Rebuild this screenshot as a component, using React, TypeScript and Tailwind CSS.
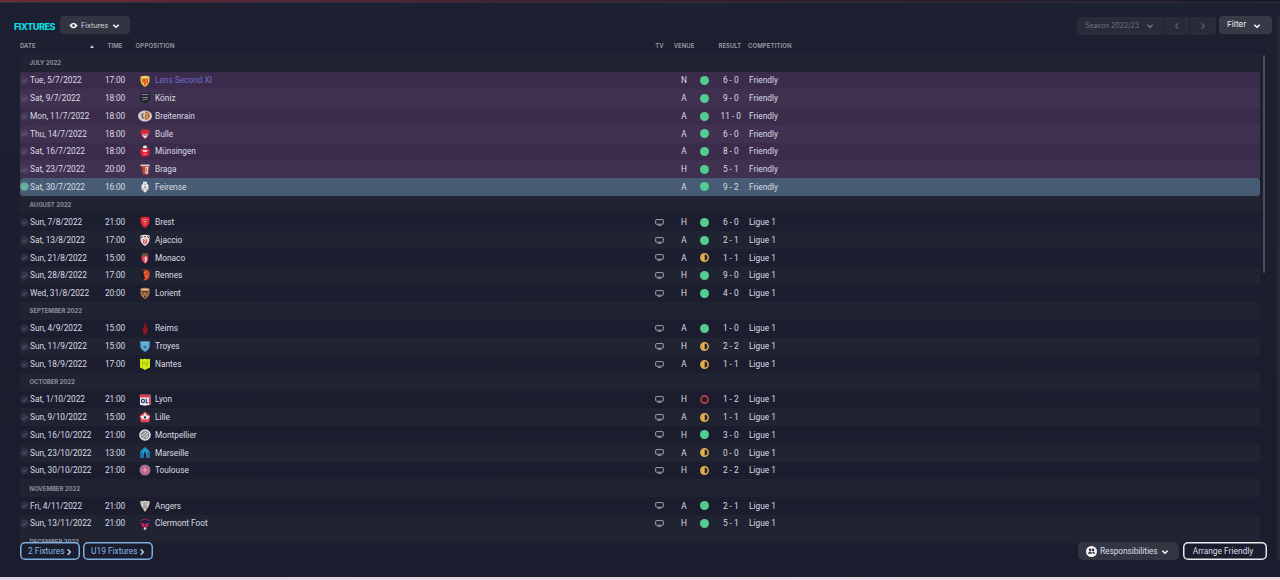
import type { ReactNode } from "react";
import clsx from "clsx";

type Result = "win" | "draw" | "loss";

type Fixture = {
  date: string;
  time: string;
  team: string;
  venue: string;
  result: Result;
  score: string;
};

type Month = {
  name: string;
  competition: string;
  fixtures: Fixture[];
};

const f = (
  date: string,
  time: string,
  team: string,
  venue: string,
  score: string,
  result: Result = "win",
): Fixture => ({ date, time, team, venue, score, result });

const months: Month[] = [
  {
    name: "JULY 2022",
    competition: "Friendly",
    fixtures: [
      f("Tue, 5/7/2022", "17:00", "Lens Second XI", "N", "6 - 0"),
      f("Sat, 9/7/2022", "18:00", "Köniz", "A", "9 - 0"),
      f("Mon, 11/7/2022", "18:00", "Breitenrain", "A", "11 - 0"),
      f("Thu, 14/7/2022", "18:00", "Bulle", "A", "6 - 0"),
      f("Sat, 16/7/2022", "18:00", "Münsingen", "A", "8 - 0"),
      f("Sat, 23/7/2022", "20:00", "Braga", "H", "5 - 1"),
      f("Sat, 30/7/2022", "16:00", "Feirense", "A", "9 - 2"),
    ],
  },
  {
    name: "AUGUST 2022",
    competition: "Ligue 1",
    fixtures: [
      f("Sun, 7/8/2022", "21:00", "Brest", "H", "6 - 0"),
      f("Sat, 13/8/2022", "17:00", "Ajaccio", "A", "2 - 1"),
      f("Sun, 21/8/2022", "15:00", "Monaco", "A", "1 - 1", "draw"),
      f("Sun, 28/8/2022", "17:00", "Rennes", "H", "9 - 0"),
      f("Wed, 31/8/2022", "20:00", "Lorient", "H", "4 - 0"),
    ],
  },
  {
    name: "SEPTEMBER 2022",
    competition: "Ligue 1",
    fixtures: [
      f("Sun, 4/9/2022", "15:00", "Reims", "A", "1 - 0"),
      f("Sun, 11/9/2022", "15:00", "Troyes", "H", "2 - 2", "draw"),
      f("Sun, 18/9/2022", "17:00", "Nantes", "A", "1 - 1", "draw"),
    ],
  },
  {
    name: "OCTOBER 2022",
    competition: "Ligue 1",
    fixtures: [
      f("Sat, 1/10/2022", "21:00", "Lyon", "H", "1 - 2", "loss"),
      f("Sun, 9/10/2022", "15:00", "Lille", "A", "1 - 1", "draw"),
      f("Sun, 16/10/2022", "21:00", "Montpellier", "H", "3 - 0"),
      f("Sun, 23/10/2022", "13:00", "Marseille", "A", "0 - 0", "draw"),
      f("Sun, 30/10/2022", "21:00", "Toulouse", "H", "2 - 2", "draw"),
    ],
  },
  {
    name: "NOVEMBER 2022",
    competition: "Ligue 1",
    fixtures: [
      f("Fri, 4/11/2022", "21:00", "Angers", "A", "2 - 1"),
      f("Sun, 13/11/2022", "21:00", "Clermont Foot", "H", "5 - 1"),
    ],
  },
  { name: "DECEMBER 2022", competition: "Ligue 1", fixtures: [] },
];

const shield = "M2.500 1.500Q7 .2 11.500 1.500V6Q11 9.500 7 12Q3 9.500 2.500 6Z";

// Club crests, all drawn on a 14x12 canvas
const crests: Record<string, ReactNode> = {
  "Lens Second XI": (
    <>
      <path d={shield} fill="#edc63a" />
      <path d="M5 3.500v4M7 3.500v7M9.200 3.500v5" stroke="#d3262d" strokeWidth="1.200" />
      <path d="M3.500 1.800h7v1.200h-7z" fill="#f0df8b" />
    </>
  ),
  Köniz: (
    <>
      <path d="M2 .8h10v7Q11 10.200 7 11.700Q3 10.200 2 7.800Z" fill="#22252b" />
      <path d="M3.500 2.500h7M4 5.500h6M4.500 8l5-1" stroke="#8b9297" strokeWidth=".9" />
    </>
  ),
  Breitenrain: (
    <>
      <ellipse cx="7" cy="6" rx="7" ry="5.600" fill="#d5cccb" />
      <path d="M7 1.500q5 0 5 4.500q-1 4-5 4z" fill="#b57233" />
      <path d="M3 4l3-1-1 3 2 2-3 1z" fill="#7b7580" />
      <path d="M9 3v2M8 7.500l2-1" stroke="#eadfcb" strokeWidth=".8" fill="none" />
    </>
  ),
  Bulle: (
    <>
      <path d="M2.500 3l2-1.500h5L12 3l-1.500 5L7 11 3.500 8z" fill="#d22b3c" />
      <path d="M4.200 5.500l1.500 1 1.300-1 1.300 1 1.500-1-.8 3L7 10.500 5 8.500z" fill="#f0e6ea" />
      <path d="M5.500 7h3" stroke="#5a2233" strokeWidth=".9" />
    </>
  ),
  Münsingen: (
    <>
      <path d="M2.500 3.500h9v5L10 11.500H4L2.500 8.500z" fill="#e01f35" />
      <path d="M5.500 1h3v2h-3zM4.500 5l1 1.500h3l1-1.500M5.500 9h3" fill="#f4dfe1" stroke="#f4dfe1" strokeWidth=".7" />
    </>
  ),
  Braga: (
    <>
      <path d="M3 2h8.500v2L10.500 11.500H5L4 4z" fill="#c04834" />
      <path d="M2.500 1.500h9v1.700h-9z" fill="#d3cccb" />
      <path d="M7.500 4h2.800L9.500 11h-2z" fill="#e6dddb" />
      <path d="M8.500 5v4" stroke="#786c7d" strokeWidth=".7" />
    </>
  ),
  Feirense: (
    <>
      <path d="M5 .8h4v2l1.500 1.200v4L7 11.800 3.500 8V4L5 2.800z" fill="#e6e7ea" />
      <path d="M5.500 3.200h3M5 7.500l1 1.500M9 7.500L8 9" stroke="#bf8a5c" strokeWidth=".8" />
      <path d="M6.200 5.300h1.600v2H6.200z" fill="#8592b0" />
    </>
  ),
  Brest: (
    <>
      <path d={shield} fill="#e02536" />
      <path d="M4.300 4q2.700-1.200 5.400 0M7 5v4M5.500 5.500h3" stroke="#f59aa0" strokeWidth=".8" fill="none" />
    </>
  ),
  Ajaccio: (
    <>
      <path d={shield} fill="#e7e1e2" />
      <path d="M5 5l.8 4.500M7 5.500v5M9 5l-.8 4.500" stroke="#d9434b" strokeWidth="1" />
      <path d="M3.200 4l1.500-2M9.300 2l1.500 2M6 2.800h2" stroke="#34313b" strokeWidth=".9" fill="none" />
    </>
  ),
  Monaco: (
    <>
      <path d="M3.700 3.500h6.600V8L7 11.900 3.700 8z" fill="#e9384f" />
      <path d="M6.800 4.500h2v5l-2 1.500z" fill="#f3cdd2" />
      <path d="M3.700 3l1-1.800h4.600L10.300 3v1.200H3.700z" fill="#6e5340" />
    </>
  ),
  Rennes: (
    <>
      <path d="M4 .8Q9-.3 11 2Q12.500 5 11 9Q8.500 12.200 5 11.200Q8 7 3 5Z" fill="#d94a26" />
      <path d="M2.500 2.500Q5 .5 7 2L5.500 5l1.500 4-1.500 2Q2.500 7 2.500 2.500z" fill="#221b20" />
      <path d="M5.500 3.200h2M8 6.500v2" stroke="#e8c9b9" strokeWidth=".9" />
    </>
  ),
  Lorient: (
    <>
      <path d={shield} fill="#bf7d48" />
      <path d="M3.500 2.600h7" stroke="#e0cbae" strokeWidth="1.200" />
      <path d="M3.500 4.200h7v1.300h-7zM4 6.500h2v1H4zM8 6.500h2v1H8zM6 8.500h2v2H6z" fill="#39323a" />
    </>
  ),
  Reims: (
    <path d="M6 .3h2.300L8.200 3.500l1.500 2-.2 3-1.200 1 .5 2.300H5.200L5.700 9.500 4.500 8.500 4.800 5.500 6.200 3.800z" fill="#8e1420" />
  ),
  Troyes: (
    <>
      <path d="M2.200 1.200h9.600V6Q11.500 9.800 7 11.900Q2.500 9.800 2.200 6Z" fill="#4d9fd3" />
      <path d="M3.500 2.900h7M4.700 5h4.600v2.500L7 9.500 4.700 7.500z" stroke="#b4d6e8" strokeWidth=".7" fill="#2c72a6" />
    </>
  ),
  Nantes: (
    <>
      <path d="M2 .8q2.500.8 5 0 2.500.8 5 0V9.500q-2 .5-5 2.500Q4 10 2 9.500z" fill="#d2ea14" />
      <path d="M4.500 8.500v-5L6.500 6V4M7.500 8l2-4.500V8" stroke="#8fab1b" strokeWidth=".6" fill="none" />
    </>
  ),
  Lyon: (
    <>
      <path d="M2 .8h10.500v10L7 11.700 2 10.700z" fill="#ebe7ea" />
      <path d="M1.500 .8H12.500v2.700H1.500z" fill="#dc3c44" />
      <path d="M11 4h1.500v6.500l-1.500.3z" fill="#dc3c44" />
      <circle cx="5" cy="7" r="1.600" fill="none" stroke="#244482" strokeWidth="1.200" />
      <path d="M8.300 4.700v4h2" stroke="#244482" strokeWidth="1.200" fill="none" />
    </>
  ),
  Lille: (
    <>
      <path d="M7 .5L12.500 5 11 11.300H3L1.500 5z" fill="#e5475a" />
      <path d="M7 1.500l1.500 3 3 .5L9.800 8.300H4.200L2.500 5l3-.5z" fill="#f7f0f3" />
      <path d="M6 5.200h1.800L8.300 7.500h-2.600z" fill="#263765" />
    </>
  ),
  Montpellier: (
    <>
      <circle cx="7" cy="6" r="5.800" fill="#dedee2" />
      <circle cx="7" cy="6" r="4.300" fill="#8a8d96" />
      <path d="M4 7l4-4M5 9l5-5M8 9l2-2" stroke="#f0eeec" strokeWidth=".9" />
    </>
  ),
  Marseille: (
    <path
      d="M3 11V5l2-2.500V8l2-7 2 7V2.500L11 5v6M5 11V8M9 11V8"
      stroke="#20a0d4"
      strokeWidth="1.300"
      fill="none"
    />
  ),
  Toulouse: (
    <>
      <circle cx="7" cy="6" r="5.500" fill="#98779a" />
      <circle cx="7" cy="6" r="3.600" fill="#cf6080" />
      <path d="M7 3.500v5M4.500 6h5" stroke="#e3b5c2" strokeWidth=".9" />
    </>
  ),
  Angers: (
    <>
      <path d="M2 1.500L7 .8l5 .7L10.800 6 7 12 3.200 6z" fill="#d6cfc7" />
      <path d="M6 4.500v4M8 4.500v4" stroke="#4b4643" strokeWidth=".7" />
      <path d="M4.500 3h5" stroke="#857b70" strokeWidth=".8" />
    </>
  ),
  "Clermont Foot": (
    <>
      <path d="M2 2.300q5-3 10 0L10.500 5h-7z" fill="#1b1e42" />
      <path d="M2 2.600q5-3 10 0" stroke="#b02a4c" strokeWidth=".9" fill="none" />
      <path d="M2.800 4.500L6 5.800h2l3.200-1.300L9.500 9l-2.500.5L4.500 9z" fill="#df1c5b" />
      <path d="M7 4.500v4" stroke="#262c60" strokeWidth="1.200" />
      <circle cx="7" cy="10.600" r="1.300" fill="#d2d0d6" />
    </>
  ),
};

function Chevron({ dir = "down", className }: { dir?: "down" | "left" | "right"; className?: string }) {
  const paths = {
    down: "M1.300 2.700L4 5.300L6.700 2.700",
    left: "M5.300 1.200L2.700 4L5.300 6.800",
    right: "M2.700 1.200L5.300 4L2.700 6.800",
  };
  return (
    <svg viewBox="0 0 8 8" className={clsx("size-2 shrink-0", className)} fill="none" stroke="currentColor" strokeWidth="1.500">
      <path d={paths[dir]} />
    </svg>
  );
}

function Tick({ active }: { active: boolean }) {
  return (
    <svg viewBox="0 0 10 10" className="size-[9px]" fill="none">
      <circle cx="5" cy="5" r="4.800" fill={active ? "#6fa399" : "#77788a"} fillOpacity={active ? 1 : 0.18} />
      <path
        d="M2.700 5.200l1.600 1.600 3.200-3.300"
        stroke={active ? "#3fe09d" : "#777889"}
        strokeOpacity={active ? 1 : 0.45}
        strokeWidth="1.200"
      />
    </svg>
  );
}

function ResultDot({ result }: { result: Result }) {
  return (
    <svg viewBox="0 0 9 9" className="size-[9px]">
      {result === "win" && <circle cx="4.500" cy="4.500" r="4.500" fill="#54cb90" />}
      {result === "draw" && (
        <>
          <circle cx="4.500" cy="4.500" r="3.700" fill="#272329" stroke="#e2b052" strokeWidth="1.500" />
          <path d="M4.700 1a3.500 3.500 0 0 0 0 7z" fill="#e2b052" />
        </>
      )}
      {result === "loss" && <circle cx="4.500" cy="4.500" r="3.600" fill="#301827" stroke="#b9454f" strokeWidth="1.600" />}
    </svg>
  );
}

function TvIcon() {
  return (
    <svg viewBox="0 0 9 7" className="h-[7px] w-[9px]" fill="none" stroke="#b0b1bb" strokeWidth=".9">
      <rect x=".7" y=".6" width="7.600" height="4.600" rx=".6" />
      <path d="M2.700 6.300h3.600" />
    </svg>
  );
}

const columns = "grid grid-cols-[10px_74px_22px_29px_494px_21px_28px_13px_38px_1fr] items-center";

function FixtureRow({ fixture, competition, shaded }: { fixture: Fixture; competition: string; shaded: boolean }) {
  const friendly = competition === "Friendly";
  const selected = fixture.team === "Feirense";

  return (
    <div
      className={clsx(
        columns,
        "h-[17.73px] shrink-0 whitespace-nowrap font-[Roboto,sans-serif] text-[8.3px] text-[#dadbe2]",
        selected && "rounded-[3px] bg-[#475c74]",
        !selected && friendly && (shaded ? "bg-[#403150]" : "bg-[#3b2c4b]"),
        !friendly && shaded && "bg-[#202332]",
      )}
    >
      <Tick active={selected} />
      <span className="tracking-[-0.03px]">{fixture.date}</span>
      <span className="text-center tracking-[-0.1px]">{fixture.time}</span>
      <svg viewBox="0 0 14 12" className="ml-[11.500px] h-3 w-3.5">
        {crests[fixture.team]}
      </svg>
      <span className={clsx(fixture.team === "Lens Second XI" && "text-[#746bd0]")}>{fixture.team}</span>
      <span className="flex justify-center">{!friendly && <TvIcon />}</span>
      <span className="text-center">{fixture.venue}</span>
      <span className="flex justify-center">
        <ResultDot result={fixture.result} />
      </span>
      <span className="pl-[1.500px] text-center">{fixture.score}</span>
      <span>{competition}</span>
    </div>
  );
}

function MonthRow({ name }: { name: string }) {
  return (
    <div className="flex h-[17.73px] shrink-0 items-center bg-[#202432] pt-px pl-[9.500px] text-[6px] font-bold tracking-[-0.05px] text-[#8b8d98]">
      {name}
    </div>
  );
}

function Header() {
  return (
    <div className="flex h-5 items-center pr-1 pl-3.5">
      <h1 className="mr-1 w-[42px] pt-0.5 text-[9px] font-extrabold tracking-[-0.4px] text-[#0cdce2]">FIXTURES</h1>
      <button className="flex h-[18px] w-[70px] items-center rounded-[4px] bg-[#323541] pt-px pl-[9px] text-[7.200px] text-[#d5d6dd]">
        <svg viewBox="0 0 9 7" className="mr-[3px] h-[7px] w-[9px]">
          <path d="M.3 3.500Q4.500-2 8.700 3.500Q4.500 9 .3 3.500z" fill="#f3f3f7" />
          <circle cx="4.500" cy="3.500" r="1.300" fill="#323541" />
        </svg>
        Fixtures
        <Chevron className="ml-1 text-white" />
      </button>
      <div className="mt-0.5 ml-auto flex h-[18px] divide-x divide-[#1e2130] overflow-hidden rounded-[4px] bg-[#282b39] text-[6.900px] text-[#70737f]">
        <button className="flex w-[87px] items-center pl-2">
          Season 2022/23
          <Chevron className="ml-[7px]" />
        </button>
        <button className="flex w-[26px] items-center justify-center">
          <Chevron dir="left" className="opacity-60" />
        </button>
        <button className="flex w-[26px] items-center justify-center">
          <Chevron dir="right" className="opacity-60" />
        </button>
      </div>
      <button className="ml-[3px] flex h-[18px] w-[53px] items-center rounded-[4px] bg-[#373a46] pb-px pl-[8px] text-[8.200px] text-[#eeeef2]">
        Filter
        <Chevron className="mt-0.5 ml-[7px] text-white" />
      </button>
    </div>
  );
}

function Footer() {
  const outline = "flex h-[18px] items-center rounded-[5px]";
  const blue = "pl-2 text-[#8ab9e7] shadow-[inset_0_0_0_1.5px_#7eaede]";

  return (
    <div className="flex h-[18px] items-center pr-[9px] pl-5 font-[Roboto,sans-serif] text-[8.400px]">
      <button className={clsx(outline, blue, "w-[60px]")}>
        2 Fixtures
        <Chevron dir="right" className="mt-px text-[#a9d1f5]" />
      </button>
      <button className={clsx(outline, blue, "ml-[3px] w-[70px]")}>
        U19 Fixtures
        <Chevron dir="right" className="mt-px text-[#a9d1f5]" />
      </button>
      <button className="ml-auto flex h-[18px] w-[101px] items-center rounded-[5px] bg-[#323542] pl-2 text-[#dddee4]">
        <svg viewBox="0 0 10 10" className="mr-[3px] size-[11px]">
          <circle cx="5" cy="5" r="5" fill="#f5f5f8" />
          <circle cx="3.700" cy="3.500" r="1.200" fill="#343643" />
          <circle cx="6.400" cy="3.500" r="1.200" fill="#343643" />
          <path d="M1.800 7q.3-2 2-2t1.700 2zM5.800 5.200q2-.5 2.500 1.800H6.200z" fill="#343643" />
        </svg>
        <span className="tracking-[-0.08px]">Responsibilities</span>
        <Chevron className="mt-px ml-1 text-white" />
      </button>
      <button
        className={clsx(outline, "ml-1 w-[84px] justify-center pr-1 text-[#dddee4] shadow-[inset_0_0_0_1.5px_#e8e9ee]")}
      >
        Arrange Friendly
      </button>
    </div>
  );
}

function App() {
  let row = 0;

  return (
    <div className="flex h-[580px] w-[1280px] flex-col overflow-hidden bg-linear-to-b from-[#1c2030] to-[#1b1c2d] font-[Inter,sans-serif] leading-none">
      <div className="h-[2px] shrink-0 bg-linear-to-r from-[#6e2a38] via-[#3b2030] to-[#1c1b2a]" />
      <div className="h-px shrink-0 bg-[#2c303e]" />
      <div className="flex min-h-0 flex-1">
        <div className="flex w-[1276px] flex-col pt-3">
          <Header />
          <div className={clsx(columns, "mt-1 ml-5 h-3.5 w-[1240px] shrink-0 text-[6px] font-semibold whitespace-nowrap text-[#9a9ca6]")}>
            <span className="col-span-2 flex items-center justify-between pr-[10px]">
              DATE
              <svg viewBox="0 0 4 3" className="h-[3px] w-1">
                <path d="M0 3L2 0L4 3z" fill="#c3c4cc" />
              </svg>
            </span>
            <span className="text-center">TIME</span>
            <span className="col-span-2 pl-[9.500px] tracking-[0.2px]">OPPOSITION</span>
            <span className="text-center">TV</span>
            <span className="text-center">VENUE</span>
            <span />
            <span className="pl-[7.500px]">RESULT</span>
            <span className="-ml-px tracking-[0.1px]">COMPETITION</span>
          </div>

          <div className="mt-px flex h-[489px] shrink-0">
            <div className="ml-5 flex w-[1240px] flex-col overflow-hidden">
              {months.map((month) => {
                row++;
                return [
                  <MonthRow key={month.name} name={month.name} />,
                  ...month.fixtures.map((fixture) => (
                    <FixtureRow
                      key={fixture.date}
                      fixture={fixture}
                      competition={month.competition}
                      shaded={row++ % 2 === 0}
                    />
                  )),
                ];
              })}
            </div>
            <div className="mt-px ml-[3px] h-[218px] w-[2px] rounded-full bg-[#4b4e5a]" />
          </div>
          <div className="-mt-px">
            <Footer />
          </div>
        </div>
        <div className="mt-[14px] mb-[16px] ml-px flex-1 rounded-l-[3px] bg-[#252936]" />
      </div>
      <div className="h-[3px] shrink-0 bg-linear-to-r from-[#e4d3e5] to-[#efd9dc]" />
    </div>
  );
}

export default App;
